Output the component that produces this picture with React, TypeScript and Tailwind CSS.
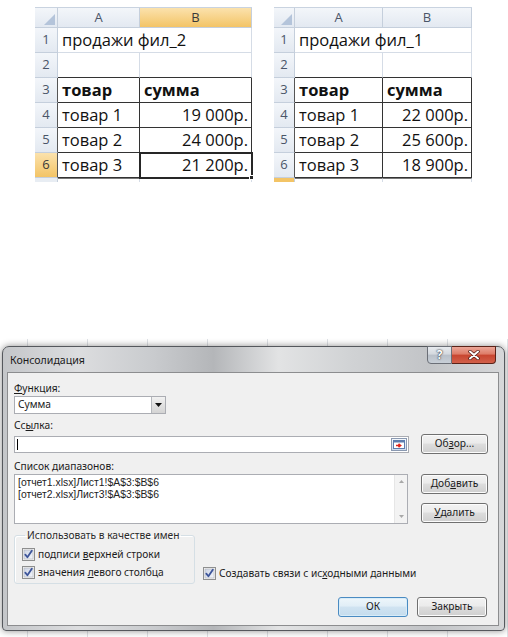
import React from 'react';

type SheetRow = { a: string; b: string; bold?: boolean };

interface SheetProps {
  title: string;
  rows: SheetRow[];
  cols: string;
  selected?: boolean;
  nextRowActive?: boolean;
}

const grid = 'border-[#d5dce6]';
const hdr = 'bg-[linear-gradient(#f3f6fa,#e3e9f1)] text-[#4a5568] text-[13px]';
const hdrSel = 'bg-[linear-gradient(#fbe2ad,#f3c466)] text-[#3a3a3a] text-[13px]';

const Sheet: React.FC<SheetProps> = ({ title, rows, cols, selected = false, nextRowActive = false }) => {
  return (
    <div className={`grid ${cols} border-t border-[#c9d3e0] font-['Open_Sans',sans-serif] text-[#111]`}>
      {/* column headers */}
      <div className={`h-[20px] border-r border-b border-[#c5cfdc] ${hdr} relative`}>
        <svg className="absolute right-[2px] bottom-[2px]" width="11" height="11" viewBox="0 0 11 11">
          <polygon points="11,0 11,11 0,11" fill="#b4c4da" />
        </svg>
      </div>
      <div className={`h-[20px] border-r border-b border-[#c5cfdc] ${hdr} flex items-center justify-center`}>A</div>
      <div className={`h-[20px] border-r border-b border-[#c5cfdc] ${selected ? hdrSel : hdr} flex items-center justify-center`}>B</div>

      {/* row 1 */}
      <div className={`h-[25px] border-r border-b border-[#c5cfdc] ${hdr} flex items-center justify-center`}>1</div>
      <div className={`h-[25px] border-b ${grid} flex items-center pl-[4px] text-[16.5px] whitespace-nowrap overflow-visible`}>{title}</div>
      <div className={`h-[25px] border-r border-b ${grid}`} />

      {/* row 2 */}
      <div className={`h-[25px] border-r border-b border-[#c5cfdc] ${hdr} flex items-center justify-center`}>2</div>
      <div className="h-[25px] border-r border-b border-r-[#d5dce6] border-b-[#333]" />
      <div className="h-[25px] border-r border-b border-r-[#d5dce6] border-b-[#333]" />

      {rows.map((r, i) => {
        const n = i + 3;
        const isSel = selected && n === 6;
        return (
          <React.Fragment key={n}>
            <div className={`h-[25px] border-r border-b border-b-[#c5cfdc] border-r-[#555] ${isSel ? hdrSel : hdr} flex items-center justify-center`}>{n}</div>
            <div className={`h-[25px] border-r border-b border-[#333] flex items-center pl-[4px] text-[16.5px] whitespace-nowrap ${r.bold ? 'font-bold' : ''}`}>{r.a}</div>
            <div className={`h-[25px] border-r border-b border-[#333] flex items-center text-[16.5px] whitespace-nowrap relative ${r.bold ? 'font-bold pl-[4px]' : 'justify-end pr-[3px]'} ${isSel ? 'outline-2 outline-[#262626] -outline-offset-1' : ''}`}>
              {r.b}
              {isSel && <span className="absolute -right-[3px] -bottom-[3px] w-[5px] h-[5px] bg-[#262626] border border-white" />}
            </div>
          </React.Fragment>
        );
      })}

      {/* partially visible row 7 */}
      <div className={`h-[4px] border-r border-[#c5cfdc] ${nextRowActive ? 'bg-[#f3c466]' : 'bg-[#e8edf3]'}`} />
      <div className={`h-[4px] border-r border-t ${grid} border-t-[#777]`} />
      <div className={`h-[4px] border-r border-t ${grid} border-t-[#777]`} />
    </div>
  );
};

const WinButton: React.FC<{ children: React.ReactNode; w?: string; primary?: boolean }> = ({ children, w = 'w-[67px]', primary = false }) => (
  <div
    className={`${w} h-[20px] rounded-[3px] border flex items-center justify-center ${
      primary
        ? 'border-[#4a8bc2] bg-[linear-gradient(#eef6fb_0%,#e1eef7_45%,#d0e3f1_50%,#c5dced_100%)] shadow-[inset_0_0_0_1px_#d8ecf8]'
        : 'border-[#707070] bg-[linear-gradient(#f2f2f2_0%,#ebebeb_45%,#dddddd_50%,#cfcfcf_100%)] shadow-[inset_0_0_0_1px_#fcfcfc]'
    }`}
  >
    {children}
  </div>
);

const Check: React.FC = () => (
  <svg width="13" height="13" viewBox="0 0 13 13" className="shrink-0">
    <defs>
      <linearGradient id="cbg" x1="0" y1="0" x2="1" y2="1">
        <stop offset="0" stopColor="#cbd3e4" />
        <stop offset="1" stopColor="#f5f7fb" />
      </linearGradient>
    </defs>
    <rect x="0.5" y="0.5" width="12" height="12" fill="#f4f4f4" stroke="#8e8f8f" />
    <rect x="2" y="2" width="9" height="9" fill="url(#cbg)" stroke="#aeb3b9" strokeWidth="0.6" />
    <path d="M3.3 6.6 L5.4 9.2 L9.8 2.8" fill="none" stroke="#3d559a" strokeWidth="1.8" strokeLinecap="round" strokeLinejoin="round" />
  </svg>
);

const Dialog: React.FC = () => (
  <div className="absolute left-[2px] top-[7px] w-[503px] h-[285px] rounded-t-[7px] rounded-b-[4px] border border-[#55585d] bg-[linear-gradient(90deg,#c4c6c9_0%,#dcdddf_15%,#c9cbce_30%,#b4b6b9_42%,#e2e3e4_55%,#d0d2d4_70%,#c2c4c7_85%,#d6d7d9_100%)] shadow-[0_0_7px_rgba(0,0,0,0.45)] flex flex-col font-['Noto_Sans',sans-serif] text-[10.2px] text-[#1b1b1b]">
    {/* title bar */}
    <div className="h-[25px] flex items-start shrink-0">
      <span className="pl-[7px] pt-[6px] text-[10.6px] leading-[14px] text-[#1a1a1a]">Консолидация</span>
      <div className="ml-auto mr-[8px] -mt-[1px] flex">
        <div className="w-[25px] h-[18px] rounded-bl-[4px] border border-[#6b6f77] bg-[linear-gradient(#e8ebef_0%,#d3d8de_45%,#b9c0c9_50%,#c8cfd7_100%)] flex items-center justify-center text-[12px] font-bold text-white [text-shadow:0_0_2px_#2b2f36,0_0_1px_#2b2f36]">
          ?
        </div>
        <div className="w-[44px] h-[18px] rounded-br-[4px] border border-l-0 border-[#5a2218] bg-[linear-gradient(#eba698_0%,#de7b66_45%,#c8452f_50%,#d2604a_100%)] flex items-center justify-center">
          <svg width="12" height="10" viewBox="0 0 12 10">
            <path d="M2 1.5 L10 8.5 M10 1.5 L2 8.5" stroke="#4a1510" strokeWidth="3.4" strokeLinecap="round" />
            <path d="M2 1.5 L10 8.5 M10 1.5 L2 8.5" stroke="#ffffff" strokeWidth="2" strokeLinecap="round" />
          </svg>
        </div>
      </div>
    </div>

    {/* client area */}
    <div className="flex-1 ml-[4px] mr-[5px] mb-[4px] border border-[#8c8d8f] bg-[#f0f0f0] pl-[6px] pr-[10px] pt-[9px] flex flex-col">
      <div className="h-[13px] leading-[13px]">
        <span className="underline">Ф</span>ункция:
      </div>
      <div className="mt-[1px] w-[152px] h-[18px] bg-white border border-[#abadb3] flex items-center">
        <span className="pl-[3px] flex-1">Сумма</span>
        <div className="w-[14px] h-[16px] border-l border-[#b5b8bd] bg-[linear-gradient(#f2f2f2,#e1e1e1_50%,#d4d4d4)] flex items-center justify-center">
          <svg width="7" height="4" viewBox="0 0 7 4">
            <polygon points="0,0 7,0 3.5,4" fill="#111" />
          </svg>
        </div>
      </div>

      <div className="mt-[5px] h-[13px] leading-[13px]">
        Сс<span className="underline">ы</span>лка:
      </div>
      <div className="mt-[2px] h-[20px] flex items-center">
        <div className="w-[395px] h-[17px] bg-white border border-[#abadb3] flex items-center">
          <span className="ml-[2px] w-px h-[11px] bg-black" />
          <div className="ml-auto mr-[1px] w-[16px] h-[13px] border border-[#8a99b1] bg-[linear-gradient(#f4f8fd,#cfdcee)] flex items-center justify-center">
            <svg width="12" height="9" viewBox="0 0 12 9">
              <rect x="0.5" y="0.5" width="11" height="8" fill="#ffffff" stroke="#5d7cae" />
              <rect x="0.5" y="0.5" width="11" height="2" fill="#5d7cae" />
              <path d="M3 5.5 H7 M5.5 3.8 L7.6 5.5 L5.5 7.2" stroke="#e0241b" strokeWidth="1.6" fill="none" />
            </svg>
          </div>
        </div>
        <div className="ml-[12px]">
          <WinButton>
            Об<span className="underline">з</span>ор...
          </WinButton>
        </div>
      </div>

      <div className="mt-[6px] h-[13px] leading-[13px]">Список диапазонов:</div>
      <div className="mt-[1px] flex items-start">
        <div className="w-[394px] h-[50px] bg-white border border-[#abadb3] flex">
          <div className="flex-1 pl-[3px] pt-[2px] leading-[12px] text-[10.4px] font-['Liberation_Sans',sans-serif] text-[#222]">
            <div>[отчет1.xlsx]Лист1!$A$3:$B$6</div>
            <div>[отчет2.xlsx]Лист3!$A$3:$B$6</div>
          </div>
          <div className="w-[13px] h-full bg-[#f3f3f3] border-l border-[#e6e6e6] flex flex-col items-center justify-between py-[5px]">
            <svg width="5" height="3" viewBox="0 0 5 3">
              <polygon points="2.5,0 5,3 0,3" fill="#a8a8a8" />
            </svg>
            <svg width="5" height="3" viewBox="0 0 5 3">
              <polygon points="0,0 5,0 2.5,3" fill="#a8a8a8" />
            </svg>
          </div>
        </div>
        <div className="ml-[13px] flex flex-col gap-[9px]">
          <WinButton>
            Доб<span className="underline">а</span>вить
          </WinButton>
          <WinButton>
            <span className="underline">У</span>далить
          </WinButton>
        </div>
      </div>

      <div className="mt-[5px] flex items-start">
        <fieldset className="w-[181px] border border-[#d5dfe5] rounded-[3px] pl-[7px] pb-[4px] shadow-[inset_1px_1px_0_#ffffff]">
          <legend className="ml-[3px] px-[2px] leading-[13px] text-[#2a2a2a]">Использовать в качестве имен</legend>
          <div className="mt-[6px] h-[13px] flex items-center gap-[3px]">
            <Check />
            <span>
              подписи <span className="underline">в</span>ерхней строки
            </span>
          </div>
          <div className="mt-[5px] h-[13px] flex items-center gap-[3px]">
            <Check />
            <span>
              значения <span className="underline">л</span>евого столбца
            </span>
          </div>
        </fieldset>
        <div className="ml-[8px] mt-[38px] h-[13px] flex items-center gap-[3px] whitespace-nowrap">
          <Check />
          <span>
            Создавать связи с ис<span className="underline">х</span>одными данными
          </span>
        </div>
      </div>

      <div className="mt-[13px] flex justify-end gap-[9px] pr-[1px]">
        <WinButton w="w-[70px]" primary>
          ОК
        </WinButton>
        <WinButton w="w-[70px]">Закрыть</WinButton>
      </div>
    </div>
  </div>
);

export default function App() {
  const left: SheetRow[] = [
    { a: 'товар', b: 'сумма', bold: true },
    { a: 'товар 1', b: '19 000р.' },
    { a: 'товар 2', b: '24 000р.' },
    { a: 'товар 3', b: '21 200р.' },
  ];
  const right: SheetRow[] = [
    { a: 'товар', b: 'сумма', bold: true },
    { a: 'товар 1', b: '22 000р.' },
    { a: 'товар 2', b: '25 600р.' },
    { a: 'товар 3', b: '18 900р.' },
  ];

  return (
    <div className="w-[508px] h-[637px] bg-white overflow-hidden">
      {/* two worksheets */}
      <div className="flex pt-[7px]">
        <div className="ml-[35px]">
          <Sheet title="продажи фил_2" rows={left} cols="grid-cols-[23px_82px_112px]" selected />
        </div>
        <div className="ml-[22px]">
          <Sheet title="продажи фил_1" rows={right} cols="grid-cols-[21px_88px_89px]" nextRowActive />
        </div>
      </div>

      {/* worksheet behind the dialog */}
      <div className="relative mt-[157px] h-[299px]">
        <div className="flex h-full">
          <div className="w-[38px] border-r border-[#dfe2e6]" />
          {[0, 1, 2, 3, 4, 5, 6, 7].map((c) => (
            <div key={c} className="w-[60px] shrink-0 border-r border-[#dfe2e6]" />
          ))}
        </div>
        <Dialog />
      </div>
    </div>
  );
}
